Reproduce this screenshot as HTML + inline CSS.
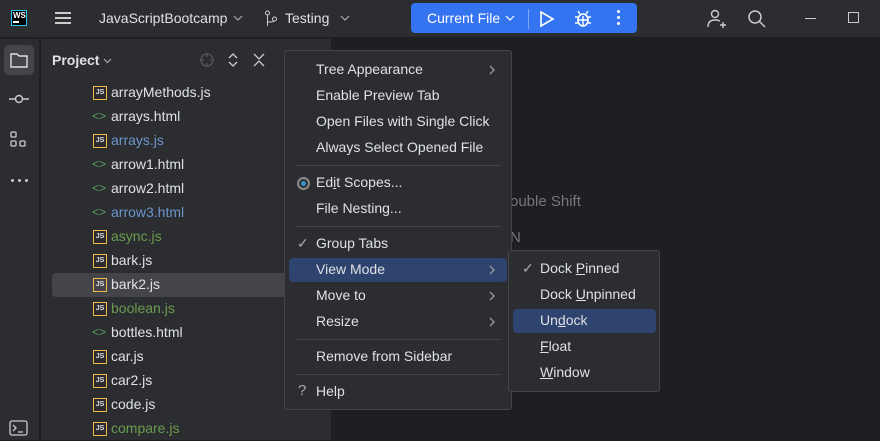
<!DOCTYPE html><html><head><style>
*{box-sizing:border-box;margin:0;padding:0}
body{width:880px;height:440px;overflow:hidden;background:#1e1f22;font-family:"Liberation Sans",sans-serif;font-size:14px;color:#dfe1e5;position:relative}
.abs{position:absolute}
.top{left:0;top:0;width:880px;height:38px;background:#2b2d30;border-bottom:1px solid #1e1f22}
.strip{left:0;top:39px;width:40px;height:401px;background:#2b2d30;border-right:1px solid #1e1f22}
.proj{left:41px;top:39px;width:291px;height:401px;background:#2b2d30;border-right:1px solid #1e1f22}
.row{position:absolute;left:52px;width:240px;height:24px;line-height:23px;padding-left:59px}
.js{position:absolute;left:41px;top:5px;width:14px;height:14px;border:1.5px solid #f0b94a;font-size:7px;font-weight:bold;line-height:11px;text-align:center;color:#dfe1e5}
.ht{position:absolute;left:40px;top:0;color:#5fa05f;font-size:12px}
.menu{left:284px;top:50px;width:228px;height:360px;background:#2b2d30;border:1px solid #43454a;border-radius:3px}
.mi{position:absolute;left:31px;height:24px;line-height:22px}
.sep{position:absolute;left:10px;right:10px;height:1px;background:#43454a}
.arr{position:absolute;left:204px}
.sub{left:508px;top:250px;width:152px;height:142px;background:#2b2d30;border:1px solid #43454a;border-radius:3px}
u{text-decoration:underline}
</style></head><body>
<div class="abs top"></div>
<div class="abs" style="left:11px;top:10px;width:16px;height:16px;background:#000;border:1.5px solid #27c7f5;color:#fff;font-size:8px;font-weight:bold;line-height:9px;padding-left:1px">WS<div style="width:6px;height:1.5px;background:#fff;margin-top:1px"></div></div>
<div class="abs" style="left:55px;top:12px;width:16px;height:2px;background:#ccc;box-shadow:0 5px 0 #ccc,0 10px 0 #ccc"></div>
<div class="abs" style="left:99px;top:10px;font-size:14px">JavaScriptBootcamp</div>
<svg class="abs" style="left:233px;top:15px" width="10" height="6"><path d="M1 1l4 4l4-4" fill="none" stroke="#aaa" stroke-width="1.2"/></svg>
<svg class="abs" style="left:264px;top:10px" width="14" height="18"><circle cx="3.5" cy="3" r="2" fill="none" stroke="#ccc"/><circle cx="10.5" cy="9" r="2" fill="none" stroke="#ccc"/><path d="M3.5 5V16M3.5 12Q10 12 10.5 11" fill="none" stroke="#ccc"/></svg>
<div class="abs" style="left:285px;top:10px;font-size:14px">Testing</div>
<svg class="abs" style="left:340px;top:15px" width="10" height="6"><path d="M1 1l4 4l4-4" fill="none" stroke="#aaa" stroke-width="1.2"/></svg>
<div class="abs" style="left:411px;top:3px;width:226px;height:30px;background:#3574f0;border-radius:4px"></div>
<div class="abs" style="left:427px;top:10px;font-size:14px;color:#fff">Current File</div>
<svg class="abs" style="left:505px;top:15px" width="10" height="6"><path d="M1 1l4 4l4-4" fill="none" stroke="#fff" stroke-width="1.2"/></svg>
<div class="abs" style="left:528px;top:9px;width:1px;height:20px;background:#7fa5f0"></div>
<svg class="abs" style="left:538px;top:10px" width="18" height="18"><path d="M3 2L15 9L3 16Z" fill="none" stroke="#fff" stroke-width="1.6"/></svg>
<svg class="abs" style="left:573px;top:9px" width="20" height="20"><ellipse cx="10" cy="11" rx="5" ry="6" fill="none" stroke="#fff" stroke-width="1.6"/><path d="M5 11h10M2 8h3M15 8h3M2 14h3M15 14h3M7 5l-2-3M13 5l2-3M10 7v10" stroke="#fff" stroke-width="1.4"/></svg>
<div class="abs" style="left:617px;top:10px;width:3px;height:3px;background:#fff;border-radius:2px;box-shadow:0 6px 0 #fff,0 12px 0 #fff"></div>
<svg class="abs" style="left:705px;top:8px" width="22" height="22"><circle cx="10" cy="6" r="3.5" fill="none" stroke="#ccc" stroke-width="1.4"/><path d="M3 19Q3 12 10 12Q13 12 15 13M15 17h6M18 14v6" fill="none" stroke="#ccc" stroke-width="1.4"/></svg>
<svg class="abs" style="left:746px;top:8px" width="22" height="22"><circle cx="9" cy="9" r="6" fill="none" stroke="#ccc" stroke-width="1.5"/><path d="M13.5 13.5L19 19" stroke="#ccc" stroke-width="1.5"/></svg>
<div class="abs" style="left:805px;top:18px;width:11px;height:1px;background:#ccc"></div>
<div class="abs" style="left:848px;top:12px;width:11px;height:11px;border:1px solid #ccc"></div>

<div class="abs strip"></div>
<div class="abs" style="left:4px;top:45px;width:30px;height:30px;background:#43454a;border-radius:5px"></div>
<svg class="abs" style="left:9px;top:50px" width="20" height="20"><path d="M2 4h6l2 2h8v11H2Z" fill="none" stroke="#ddd" stroke-width="1.4"/></svg>
<svg class="abs" style="left:8px;top:92px" width="22" height="14"><circle cx="11" cy="7" r="3.5" fill="none" stroke="#ccc" stroke-width="1.4"/><path d="M1 7h6M15 7h6" stroke="#ccc" stroke-width="1.4"/></svg>
<svg class="abs" style="left:10px;top:131px" width="18" height="18"><rect x="1" y="1" width="5" height="5" fill="none" stroke="#ccc" stroke-width="1.3" rx="1"/><rect x="1" y="10" width="5" height="5" fill="none" stroke="#ccc" stroke-width="1.3" rx="1"/><rect x="10" y="10" width="5" height="5" fill="none" stroke="#ccc" stroke-width="1.3" rx="1"/></svg>
<div class="abs" style="left:11px;top:179px;width:3px;height:3px;background:#ccc;border-radius:2px;box-shadow:7px 0 0 #ccc,14px 0 0 #ccc"></div>
<svg class="abs" style="left:9px;top:420px" width="20" height="17"><rect x="1" y="1" width="17" height="14" rx="2" fill="none" stroke="#ccc" stroke-width="1.3"/><path d="M4 5l3 3l-3 3M9 12h5" fill="none" stroke="#ccc" stroke-width="1.3"/></svg>

<div class="abs proj"></div>
<div class="abs" style="left:52px;top:52px;font-weight:bold;font-size:14px">Project</div>
<svg class="abs" style="left:103px;top:58px" width="9" height="6"><path d="M1 1l3.5 3.5l3.5-3.5" fill="none" stroke="#aaa" stroke-width="1.2"/></svg>
<svg class="abs" style="left:199px;top:52px" width="16" height="16"><circle cx="8" cy="8" r="6" fill="none" stroke="#555" stroke-width="1.3"/><path d="M8 1v4M8 11v4M1 8h4M11 8h4" stroke="#555" stroke-width="1.3"/></svg>
<svg class="abs" style="left:227px;top:52px" width="12" height="16"><path d="M2 6l4-4l4 4M2 10l4 4l4-4" fill="none" stroke="#ccc" stroke-width="1.3"/></svg>
<svg class="abs" style="left:253px;top:53px" width="12" height="14"><path d="M1 1l5 5l5-5M1 13l5-5l5 5" fill="none" stroke="#ccc" stroke-width="1.3"/></svg>
<div class="abs" style="left:52px;top:273px;width:240px;height:24px;background:#43454a;border-radius:4px"></div>
<div class="row" style="top:81px"><span class="js">JS</span>arrayMethods.js</div>
<div class="row" style="top:105px"><span class="ht">&lt;&gt;</span>arrays.html</div>
<div class="row" style="top:129px;color:#6c95cc"><span class="js">JS</span>arrays.js</div>
<div class="row" style="top:153px"><span class="ht">&lt;&gt;</span>arrow1.html</div>
<div class="row" style="top:177px"><span class="ht">&lt;&gt;</span>arrow2.html</div>
<div class="row" style="top:201px;color:#6c95cc"><span class="ht">&lt;&gt;</span>arrow3.html</div>
<div class="row" style="top:225px;color:#6a9c4f"><span class="js">JS</span>async.js</div>
<div class="row" style="top:249px"><span class="js">JS</span>bark.js</div>
<div class="row" style="top:273px"><span class="js">JS</span>bark2.js</div>
<div class="row" style="top:297px;color:#6a9c4f"><span class="js">JS</span>boolean.js</div>
<div class="row" style="top:321px"><span class="ht">&lt;&gt;</span>bottles.html</div>
<div class="row" style="top:345px"><span class="js">JS</span>car.js</div>
<div class="row" style="top:369px"><span class="js">JS</span>car2.js</div>
<div class="row" style="top:393px"><span class="js">JS</span>code.js</div>
<div class="row" style="top:417px;color:#6a9c4f"><span class="js">JS</span>compare.js</div>

<div class="abs" style="left:510px;top:193px;font-size:15px;color:#777">ouble Shift</div>
<div class="abs" style="left:510px;top:229px;font-size:15px;color:#777">N</div>

<div class="abs menu">
<div class="mi" style="top:7px">Tree Appearance</div><svg class="arr" style="top:14px" width="6" height="10"><path d="M1 1l4 4l-4 4" fill="none" stroke="#aaa" stroke-width="1.2"/></svg>
<div class="mi" style="top:33px">Enable Preview Tab</div>
<div class="mi" style="top:59px">Open Files with Single Click</div>
<div class="mi" style="top:85px">Always Select Opened File</div>
<div class="sep" style="top:114px"></div>
<div style="position:absolute;left:12px;top:126px;width:13px;height:13px;border-radius:50%;border:2px solid #888;background:#3592c4;box-shadow:inset 0 0 0 2px #2b2d30"></div>
<div class="mi" style="top:120px">Ed<u>i</u>t Scopes...</div>
<div class="mi" style="top:146px">File Nesting...</div>
<div class="sep" style="top:175px"></div>
<div class="mi" style="top:181px;left:12px;color:#aaa">&#10003;</div>
<div class="mi" style="top:181px">Group Tabs</div>
<div style="position:absolute;left:4px;top:207px;width:218px;height:24px;background:#2e436e;border-radius:4px"></div>
<div class="mi" style="top:207px">View Mode</div><svg class="arr" style="top:214px" width="6" height="10"><path d="M1 1l4 4l-4 4" fill="none" stroke="#aaa" stroke-width="1.2"/></svg>
<div class="mi" style="top:233px">Move to</div><svg class="arr" style="top:240px" width="6" height="10"><path d="M1 1l4 4l-4 4" fill="none" stroke="#aaa" stroke-width="1.2"/></svg>
<div class="mi" style="top:259px">Resize</div><svg class="arr" style="top:266px" width="6" height="10"><path d="M1 1l4 4l-4 4" fill="none" stroke="#aaa" stroke-width="1.2"/></svg>
<div class="sep" style="top:288px"></div>
<div class="mi" style="top:294px">Remove from Sidebar</div>
<div class="sep" style="top:323px"></div>
<div class="mi" style="top:329px;left:13px;color:#aaa;font-size:15px">?</div>
<div class="mi" style="top:329px">Help</div>
</div>

<div class="abs sub">
<div style="position:absolute;left:4px;top:58px;width:143px;height:24px;background:#2e436e;border-radius:4px"></div>
<div class="mi" style="top:6px;left:13px;color:#aaa">&#10003;</div>
<div class="mi" style="top:6px">Dock <u>P</u>inned</div>
<div class="mi" style="top:32px">Dock <u>U</u>npinned</div>
<div class="mi" style="top:58px">Un<u>d</u>ock</div>
<div class="mi" style="top:84px"><u>F</u>loat</div>
<div class="mi" style="top:110px"><u>W</u>indow</div>
</div>
</body></html>
